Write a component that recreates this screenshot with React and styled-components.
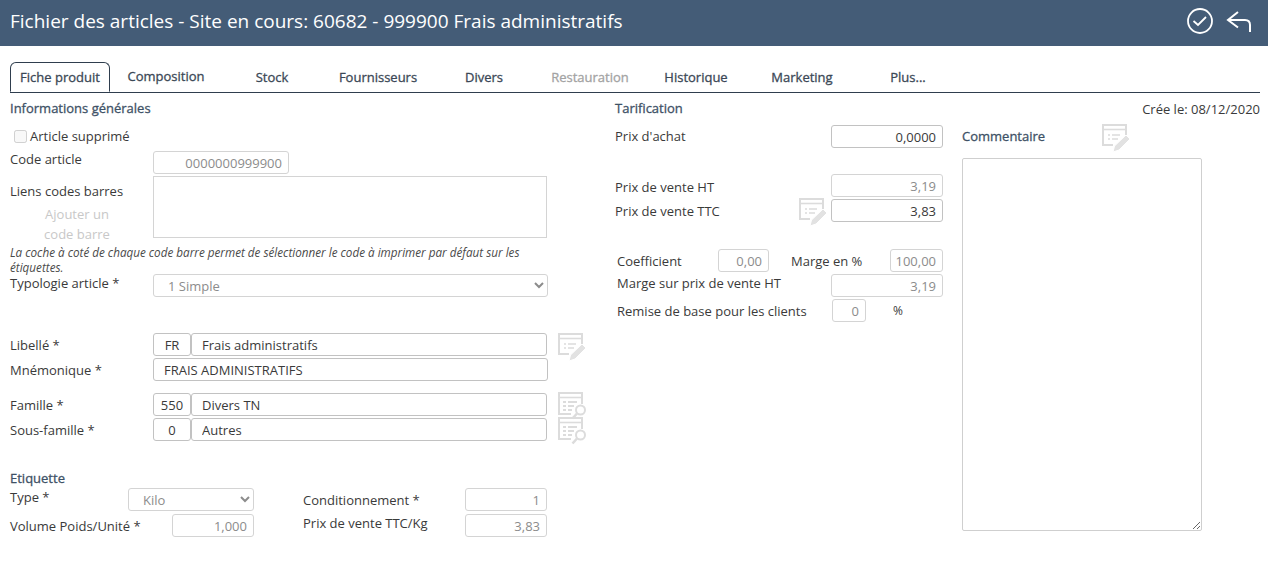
import React from 'react';
import styled, { createGlobalStyle } from 'styled-components';

const GlobalStyle = createGlobalStyle`
  html, body {
    margin: 0;
    padding: 0;
    background: #fff;
    font-family: 'Open Sans', sans-serif;
    font-size: 13px;
    color: #3a3a3a;
  }
`;

const Header = styled.header`
  height: 46px;
  background: #445c77;
  color: #fff;
  display: flex;
  align-items: center;
  justify-content: space-between;
  padding: 0 17px 4px 10px;
  box-sizing: border-box;
`;

const HeaderTitle = styled.h1`
  margin: 0;
  font-size: 19px;
  font-weight: 400;
`;

const HeaderActions = styled.div`
  display: flex;
  align-items: center;
  gap: 13px;
`;

const Body = styled.main`
  padding: 16px 8px 0 10px;
`;

const TabBar = styled.nav`
  display: flex;
  height: 30px;
  border-bottom: 1px solid #2f3e4e;
`;

const Tab = styled.div`
  box-sizing: border-box;
  width: ${p => (p.$active ? '100px' : '106px')};
  height: ${p => (p.$active ? '30px' : '29px')};
  margin-left: ${p => p.$ml || 0}px;
  padding-top: ${p => p.$pt || 7}px;
  text-align: center;
  font-weight: 400;
  font-size: 13px;
  -webkit-text-stroke: 0.3px;
  line-height: 17px;
  color: ${p => (p.$disabled ? '#a3a3a3' : '#3b4856')};
  background: #fff;
  ${p => p.$active && `
    border: 1px solid #2f3e4e;
    border-bottom: 1px solid #fff;
    border-radius: 6px 6px 0 0;
  `}
`;

const Columns = styled.div`
  display: grid;
  grid-template-columns: 605px 347px 298px;
`;

const Column = styled.section`
  min-width: 0;
`;

const SectionTitle = styled.h2`
  margin: ${p => p.$mt || 0}px 0 0;
  height: 18px;
  font-size: 13px;
  line-height: 17px;
  font-weight: 400;
  -webkit-text-stroke: 0.3px;
  color: #3e5166;
`;

const Row = styled.div`
  display: flex;
  align-items: flex-start;
  height: ${p => p.$h || 23}px;
  width: ${p => (p.$w ? `${p.$w}px` : 'auto')};
  margin-top: ${p => p.$mt || 0}px;
`;

const Label = styled.label`
  display: block;
  flex: none;
  width: ${p => p.$w || 143}px;
  margin-left: ${p => p.$ml || 0}px;
  padding-top: ${p => p.$pt || 0}px;
  line-height: 17px;
  white-space: nowrap;
`;

const CheckRow = styled.label`
  display: flex;
  align-items: center;
  height: 18px;
  margin: 9px 0 0 4px;
`;

const Check = styled.input`
  width: 13px;
  height: 13px;
  margin: 0 3px 0 0;
`;

const Field = styled.input`
  box-sizing: border-box;
  flex: none;
  height: 23px;
  width: ${p => p.$w}px;
  margin-left: ${p => (p.$push ? 'auto' : `${p.$ml || 0}px`)};
  padding: ${p => (p.$align === 'left' ? '0 10px' : p.$align === 'center' ? '0 2px' : '0 6px 0 2px')};
  border: 1px solid ${p => (p.$active ? '#c2c2c2' : '#d4d4d4')};
  border-radius: 3px;
  outline: none;
  background: #fff;
  color: ${p => (p.$active ? '#3a3a3a' : '#8c8c8c')};
  font: 13px 'Open Sans', sans-serif;
  text-align: ${p => p.$align || 'right'};
`;

const Select = styled.select`
  box-sizing: border-box;
  flex: none;
  height: 23px;
  width: ${p => p.$w}px;
  margin-left: ${p => p.$ml || 0}px;
  padding: 0 10px;
  border: 1px solid #d4d4d4;
  border-radius: 3px;
  background: #fff;
  color: #8c8c8c;
  opacity: 1;
  font: 13px 'Open Sans', sans-serif;
`;

const BarcodeBox = styled.div`
  flex: none;
  box-sizing: border-box;
  width: 394px;
  height: 62px;
  border: 1px solid #d4d4d4;
`;

const LabelStack = styled.div`
  flex: none;
  width: 143px;
`;

const AddLink = styled.div`
  width: 134px;
  margin-top: 4px;
  text-align: center;
  line-height: 20px;
  color: #c8c8c8;
`;

const Note = styled.p`
  margin: 7px 0 -1px;
  width: 530px;
  font-size: 11.7px;
  line-height: 15px;
  font-style: italic;
  color: #4a4a4a;
`;

const Percent = styled.span`
  margin-left: 27px;
  padding-top: 3px;
  font-size: 12px;
  line-height: 17px;
`;

const IconWrap = styled.span`
  flex: none;
  display: block;
  width: 28px;
  height: 28px;
  margin-left: ${p => p.$ml || 0}px;
  margin-right: ${p => p.$mr || 0}px;
  margin-top: ${p => p.$mt || 0}px;
`;

const DateLine = styled.div`
  margin-top: 7px;
  height: 18px;
  line-height: 18px;
  text-align: right;
`;

const CommentHead = styled.div`
  display: flex;
  align-items: center;
  height: 28px;
  margin-top: 6px;
`;

const CommentTitle = styled.span`
  width: 140px;
  padding-bottom: 4px;
  font-size: 13px;
  -webkit-text-stroke: 0.3px;
  color: #3e5166;
`;

const Comment = styled.textarea`
  display: block;
  box-sizing: border-box;
  width: 240px;
  height: 373px;
  margin: 6px 0 0;
  border: 1px solid #cfcfcf;
  border-radius: 2px;
  outline: none;
`;

const NoteIcon = props => (
  <IconWrap {...props}>
    <svg width="28" height="28" viewBox="0 0 28 28" fill="none" stroke="#dcdcdc">
      <path d="M11 21H1V1h23v11" strokeWidth="2" />
      <path d="M1 5.5h23" strokeWidth="1.6" />
      <path d="M6 11h2M10 11h8M6 15h2M10 15h6" strokeWidth="1.6" />
      <path d="M11 28l1.5-6L24 11l4 4-11 11z" fill="#e2e2e2" stroke="#fff" strokeWidth="1" />
    </svg>
  </IconWrap>
);

const SearchIcon = props => (
  <IconWrap $mt={-1} {...props}>
    <svg width="28" height="28" viewBox="0 0 28 28" fill="none" stroke="#dcdcdc">
      <path d="M13 22H1V1h23v11" strokeWidth="2" />
      <path d="M1 5.5h23" strokeWidth="1.6" />
      <path d="M5 10h3M10 10h9M5 14h3M10 14h6M5 18h3M10 18h4" strokeWidth="1.8" />
      <circle cx="22.5" cy="18" r="4.5" strokeWidth="2" fill="#fff" />
      <path d="M19 21.5L14.5 26.5" strokeWidth="2.6" />
    </svg>
  </IconWrap>
);

const tabs = ['Stock', 'Fournisseurs', 'Divers'];
const tabsAfter = ['Historique', 'Marketing', 'Plus...'];

export default function App() {
  return (
    <>
      <GlobalStyle />
      <Header>
        <HeaderTitle>Fichier des articles - Site en cours: 60682 - 999900 Frais administratifs</HeaderTitle>
        <HeaderActions>
          <svg width="26" height="26" viewBox="0 0 26 26" fill="none" stroke="#fff" strokeWidth="1.8">
            <circle cx="13" cy="13" r="12" />
            <path d="M6.5 13l4.5 4 8-8" />
          </svg>
          <svg width="25" height="22" viewBox="0 0 25 22" fill="none" stroke="#fff" strokeWidth="2">
            <path d="M12 2L2 10l10 7.5" />
            <path d="M2 10h17c3 0 5 2 5 5v7" />
          </svg>
        </HeaderActions>
      </Header>
      <Body>
        <TabBar>
          <Tab $active $pt={6}>Fiche produit</Tab>
          <Tab $ml={3} $pt={6}>Composition</Tab>
          {tabs.map(t => <Tab key={t}>{t}</Tab>)}
          <Tab $disabled>Restauration</Tab>
          {tabsAfter.map(t => <Tab key={t}>{t}</Tab>)}
        </TabBar>
        <Columns>
          <Column>
            <SectionTitle $mt={7}>Informations générales</SectionTitle>
            <CheckRow>
              <Check type="checkbox" disabled />
              Article supprimé
            </CheckRow>
            <Row $mt={6}>
              <Label>Code article</Label>
              <Field readOnly $w={136} value="0000000999900" />
            </Row>
            <Row $mt={2} $h={62}>
              <LabelStack>
                <Label $pt={7}>Liens codes barres</Label>
                <AddLink>Ajouter un<br />code barre</AddLink>
              </LabelStack>
              <BarcodeBox />
            </Row>
            <Note>
              La coche à coté de chaque code barre permet de sélectionner le code à imprimer par défaut sur les étiquettes.
            </Note>
            <Row>
              <Label $pt={1}>Typologie article *</Label>
              <Select disabled $w={395} defaultValue="1">
                <option value="1">1 Simple</option>
              </Select>
            </Row>
            <Row $mt={36}>
              <Label $pt={4}>Libellé *</Label>
              <Field readOnly $active $align="center" $w={38} value="FR" />
              <Field readOnly $active $align="left" $w={356} value="Frais administratifs" />
              <NoteIcon $ml={11} />
            </Row>
            <Row $mt={2}>
              <Label $pt={4}>Mnémonique *</Label>
              <Field readOnly $active $align="left" $w={395} value="FRAIS ADMINISTRATIFS" />
            </Row>
            <Row $mt={12}>
              <Label $pt={4}>Famille *</Label>
              <Field readOnly $active $align="center" $w={38} value="550" />
              <Field readOnly $active $align="left" $w={356} value="Divers TN" />
              <SearchIcon $ml={11} />
            </Row>
            <Row $mt={2}>
              <Label $pt={4}>Sous-famille *</Label>
              <Field readOnly $active $align="center" $w={38} value="0" />
              <Field readOnly $active $align="left" $w={356} value="Autres" />
              <SearchIcon $ml={11} />
            </Row>
            <SectionTitle $mt={29}>Etiquette</SectionTitle>
            <Row>
              <Label $w={118} $pt={1}>Type *</Label>
              <Select disabled $w={126} defaultValue="k">
                <option value="k">Kilo</option>
              </Select>
              <Label $w={162} $ml={49} $pt={4}>Conditionnement *</Label>
              <Field readOnly $w={82} value="1" />
            </Row>
            <Row $mt={3}>
              <Label $w={162} $pt={4}>Volume Poids/Unité *</Label>
              <Field readOnly $w={82} value="1,000" />
              <Label $w={162} $ml={49} $pt={1}>Prix de vente TTC/Kg</Label>
              <Field readOnly $w={82} value="3,83" />
            </Row>
          </Column>
          <Column>
            <SectionTitle $mt={7}>Tarification</SectionTitle>
            <Row $mt={7} $w={328}>
              <Label $pt={3}>Prix d'achat</Label>
              <Field readOnly $active $push $w={112} value="0,0000" />
            </Row>
            <Row $mt={26} $w={328}>
              <Label $pt={5}>Prix de vente HT</Label>
              <Field readOnly $push $w={112} value="3,19" />
            </Row>
            <Row $mt={2} $w={328}>
              <Label $pt={4}>Prix de vente TTC</Label>
              <NoteIcon $ml={41} $mr={4} $mt={-1} />
              <Field readOnly $active $w={112} value="3,83" />
            </Row>
            <Row $mt={27} $w={328}>
              <Label $w={101} $ml={2} $pt={4}>Coefficient</Label>
              <Field readOnly $w={51} value="0,00" />
              <Label $w={99} $ml={22} $pt={4}>Marge en %</Label>
              <Field readOnly $w={53} value="100,00" />
            </Row>
            <Row $mt={2} $w={328}>
              <Label $w={200} $ml={2} $pt={1}>Marge sur prix de vente HT</Label>
              <Field readOnly $push $w={112} value="3,19" />
            </Row>
            <Row $mt={2} $w={328}>
              <Label $w={215} $ml={2} $pt={4}>Remise de base pour les clients</Label>
              <Field readOnly $w={34} value="0" />
              <Percent>%</Percent>
            </Row>
          </Column>
          <Column>
            <DateLine>Crée le: 08/12/2020</DateLine>
            <CommentHead>
              <CommentTitle>Commentaire</CommentTitle>
              <NoteIcon />
            </CommentHead>
            <Comment readOnly />
          </Column>
        </Columns>
      </Body>
    </>
  );
}
